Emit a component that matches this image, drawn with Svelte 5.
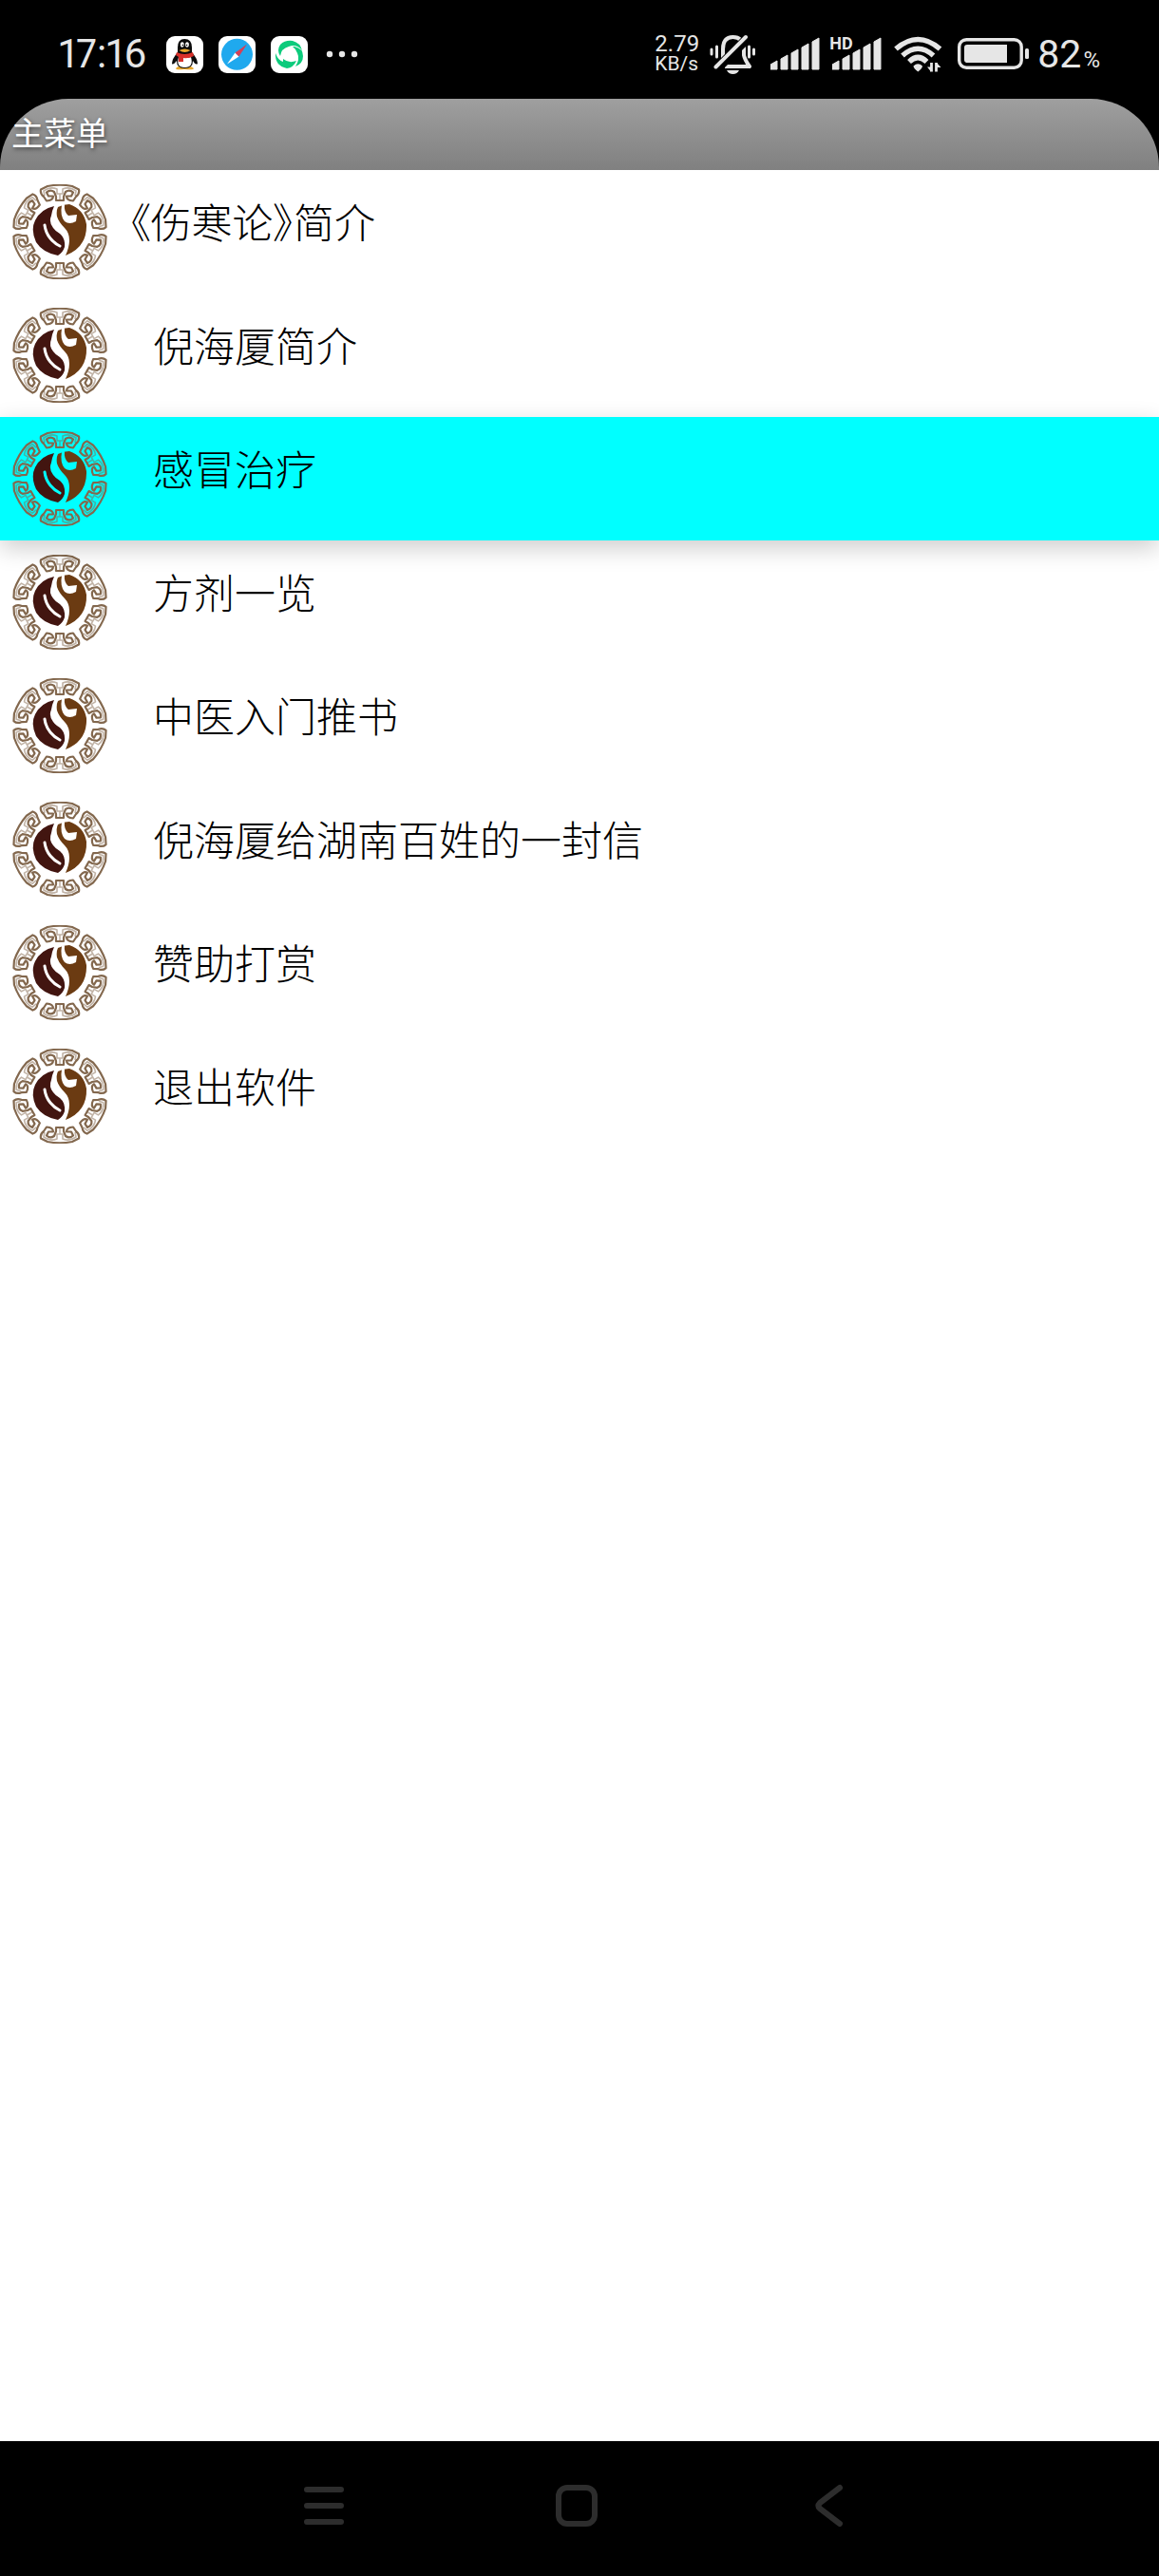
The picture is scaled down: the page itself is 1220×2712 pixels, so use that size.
<script lang="ts">
	type MenuItem = { label: string; flush?: boolean };

	const items: MenuItem[] = [
		{ label: '《伤寒论》简介', flush: true },
		{ label: '倪海厦简介' },
		{ label: '感冒治疗' },
		{ label: '方剂一览' },
		{ label: '中医入门推书' },
		{ label: '倪海厦给湖南百姓的一封信' },
		{ label: '赞助打赏' },
		{ label: '退出软件' }
	];

	let selected = $state(2);
	const turns = [0, 60, 120, 180, 240, 300];
</script>

{#snippet bars()}
	<path d="M0 41V36L7 32V41ZM11 41V30L18 26V41ZM22 41V24L29 20V41ZM33 41V18L40 14V41ZM44 41V12L51 8V41Z" stroke="#e6e6e6" stroke-width="1" stroke-linejoin="round" />
{/snippet}

{#snippet emblem()}
	<svg class="emblem" viewBox="0 0 100 100" aria-hidden="true">
		{#each turns as turn}
			<g transform="rotate({turn} 50 50)" fill="none" stroke="#83684e" stroke-linejoin="round">
				<path stroke-width="2.2" d="M37 2Q50 -.5 63 2L70 5.500Q71 10 67 13L64 17.500Q57 17 57 12.500H62L64 8.500Q60 5 56 8L54 13V17H46V13L44 8Q40 5 36 8.500L38 12.500H43Q43 17 36 17.500L33 13Q29 10 30 5.500Z" />
				<path stroke-width="1.600" opacity=".5" d="M34 12L33 7Q40 2 47 5V10H53V5Q60 2 67 7L66 12M50 10V17" />
			</g>
		{/each}
		<path fill="#421510" d="M44 23Q42 27 41 33Q38 40 43 46Q45 49 50 52Q56 57 55 66Q53 72 48 75Q32 72 25 61Q19 48 24 38Q30 26 44 23Z" />
		<path fill="none" class="slit" stroke-width="3" stroke-linecap="round" d="M34 43Q35 51 40 57Q44 62 50 65" />
		<path fill="#6b3b12" d="M48 24Q54 21 60 21Q75 26 78 42Q79 66 56 75Q60 66 60 59Q60 51 55 46Q49 40 47 34Q46 28 48 24Z" />
		<path class="hook" d="M52 22L55 21Q54 29 59 33L68 32L67 39Q60 43 55 39Q50 33 52 22Z" />
	</svg>
{/snippet}

<div class="screen">
	<div class="statusbar">
		<span class="clock">17:16</span>
		<div class="apps">
			<svg class="app" viewBox="0 0 39 39" aria-hidden="true">
				<rect width="39" height="39" rx="9" fill="#fff" />
				<path fill="#e8a72c" d="M10 34Q13 30 19 33Q25 30 29 34Q29 36 19 35Q10 36 10 34Z" />
				<path fill="#0b0b0b" d="M19.300 3Q27 3 27 12V17Q33 24 33 29Q31 31 28 26Q28 34 19.300 34Q11 34 11 26Q7 31 6 29Q6 24 12 17V12Q12 3 19.300 3Z" />
				<path fill="#fff" d="M13 22Q19 24 26 22Q29 33 19.500 33Q10 33 13 22Z" />
				<path fill="#d8302a" d="M11 17Q19 21 28 17L29 21Q23 24 18 23V27H13V22L10 20Z" />
				<ellipse cx="16.800" cy="9" rx="1.900" ry="2.800" fill="#fff" />
				<ellipse cx="22" cy="9" rx="1.900" ry="2.800" fill="#fff" />
				<circle cx="17.300" cy="9.500" r=".8" />
				<circle cx="21.600" cy="9.500" r=".8" />
				<path fill="#e8a72c" d="M13.500 15Q19.500 12 25.500 15Q19.500 19 13.500 15Z" />
			</svg>
			<svg class="app" viewBox="0 0 39 39" aria-hidden="true">
				<rect width="39" height="39" rx="9" fill="#fff" />
				<circle cx="19.500" cy="19.300" r="16.500" fill="#1fa9ee" />
				<path fill="#fff" d="M9 29.500L17.500 17.500L21.500 21.500Z" />
				<path fill="#d63f55" d="M30 8.500L17.500 17.500L21.500 21.500Z" />
			</svg>
			<svg class="app" viewBox="0 0 39 39" aria-hidden="true">
				<rect width="39" height="39" rx="9" fill="#fff" />
				<g fill="#0ccb7c">
					<path d="M10 9Q15 4 23 5Q31 7 33 15Q27 8 19 11Q11 13 10 21Q6 15 10 9Z" />
					<path d="M5 18Q8 26 13 27L13 24Q19 29 27 26Q24 33 17 34Q4 31 5 18Z" />
					<path d="M25 11Q34 13 34 21Q34 29 26 32Q31 24 28 18Q27 14 23 11Z" />
				</g>
			</svg>
		</div>
		<svg class="more" viewBox="0 0 34 8" fill="#e6e6e6" aria-hidden="true">
			<circle cx="4" cy="4" r="3.200" /><circle cx="17" cy="4" r="3.200" /><circle cx="30" cy="4" r="3.200" />
		</svg>

		<div class="speed"><span>2.79</span><span class="unit">KB/s</span></div>
		<svg class="bell" viewBox="0 0 50 50" fill="none" stroke="#e6e6e6" aria-hidden="true">
			<path stroke-width="4" d="M15 31V20Q15 7 25.500 7Q36 7 37 19V26Q38 31 43 38H17" stroke-linejoin="round" />
			<path stroke="#000" stroke-width="10" d="M8 41L41 8" />
			<path stroke-width="4" stroke-linecap="round" d="M7.500 38.500L39 7" />
			<path stroke-width="3" stroke-linecap="round" d="M3 20V25M8.500 17V28M42.500 17V28M47.500 20V25" />
			<path fill="#e6e6e6" stroke="none" d="M19 42H32Q30 46 25.500 46Q21 46 19 42Z" />
		</svg>
		<svg class="signal" viewBox="0 0 52 50" fill="#e6e6e6" aria-hidden="true">{@render bars()}</svg>
		<div class="hd">
			<svg class="signal" viewBox="0 0 52 50" fill="#e6e6e6" aria-hidden="true">{@render bars()}</svg>
			<span class="hd-tag">HD</span>
		</div>
		<svg class="wifi" viewBox="0 0 52 50" fill="none" stroke="#e6e6e6" aria-hidden="true">
			<path stroke-width="5.500" d="M2 19.500Q25.300 -.5 48.500 19.500M9 26.500Q25.300 12 41.500 26.500M16 33Q25.300 24 34.500 33" />
			<path fill="#e6e6e6" stroke="none" d="M20.500 37.500Q25.300 33 30 37.500Q30 40 25.300 43.500Q20.500 40 20.500 37.500Z" />
			<path stroke="#000" stroke-width="8" d="M40 33V46M45 33V46" />
			<path stroke-width="2.800" d="M39.500 34V43.500M44.500 34V43.500" />
			<path fill="#e6e6e6" stroke="none" d="M35 38.500H39V43.500ZM45 34L49.500 39H45Z" />
		</svg>
		<svg class="battery" viewBox="0 0 76 50" fill="#e6e6e6" aria-hidden="true">
			<rect x="1.700" y="9.700" width="65.500" height="29.500" rx="7.500" fill="none" stroke="#e6e6e6" stroke-width="3.400" />
			<path d="M10 15H52V34H10Q7 34 7 31V18Q7 15 10 15Z" />
			<rect x="71" y="19" width="4" height="11" rx="1.500" />
		</svg>
		<span class="charge">82<small>%</small></span>
	</div>

	<header>
		<h1>主菜单</h1>
	</header>

	<ul>
		{#each items as item, i}
			<li class:active={i === selected}>
				<button type="button" onclick={() => (selected = i)}>
					{@render emblem()}
					<span class="label" class:flush={item.flush}>{item.label}</span>
				</button>
			</li>
		{/each}
	</ul>

	<nav>
		<button type="button" aria-label="Menu">
			<svg viewBox="0 0 50 50"><path d="M7 8H43M7 25H43M7 42H43" /></svg>
		</button>
		<button type="button" aria-label="Home">
			<svg viewBox="0 0 50 50"><rect x="6" y="6" width="38" height="38" rx="9" /></svg>
		</button>
		<button type="button" aria-label="Back">
			<svg viewBox="0 0 50 50"><path d="M36 6L15 22Q12 25 15 28L36 44" /></svg>
		</button>
	</nav>
</div>

<style>
	:global(body) {
		margin: 0;
		background: #000;
	}
	.screen {
		display: flex;
		flex-direction: column;
		min-height: 100vh;
		background: #000;
		font-family: "Noto Sans CJK SC", sans-serif;
	}
	button {
		border: 0;
		background: none;
		font: inherit;
		cursor: pointer;
	}
	svg {
		display: block;
		flex: none;
	}
	.statusbar {
		display: flex;
		align-items: center;
		box-sizing: border-box;
		height: 104px;
		padding: 10px 62px 0 62px;
		color: #e6e6e6;
		font-family: Roboto, "Noto Sans", sans-serif;
		font-weight: 300;
	}
	.clock {
		width: 113px;
		font-size: 42px;
		line-height: 48px;
		font-weight: 400;
		font-feature-settings: "pnum";
	}
	.apps {
		display: flex;
		gap: 16px;
	}
	.app {
		width: 39px;
		height: 39px;
	}
	.more {
		width: 34px;
		height: 8px;
		margin: 0 auto 0 19px;
	}
	.speed {
		display: flex;
		flex-direction: column;
		width: 57px;
		font-size: 24px;
		line-height: 21px;
		font-weight: 400;
	}
	.unit {
		font-size: 21px;
	}
	.bell {
		width: 50px;
		height: 50px;
		margin-right: 15px;
	}
	.signal {
		width: 52px;
		height: 50px;
	}
	.hd {
		position: relative;
		margin: 0 13px;
	}
	.hd-tag {
		position: absolute;
		top: 6px;
		left: -3px;
		padding-right: 1px;
		background: #000;
		font-size: 18px;
		line-height: 16px;
		font-weight: 700;
	}
	.wifi {
		width: 52px;
		height: 50px;
		margin-right: 15px;
	}
	.battery {
		width: 76px;
		height: 50px;
		margin-right: 8px;
	}
	.charge {
		display: flex;
		align-items: baseline;
		font-size: 41px;
		line-height: 48px;
		font-weight: 400;
	}
	small {
		margin-left: 2px;
		font-size: 24px;
		line-height: 24px;
	}

	header {
		box-sizing: border-box;
		height: 75px;
		padding: 10px 12px;
		border-radius: 72px 72px 0 0;
		background: linear-gradient(#9f9f9f, #808080);
	}
	h1 {
		margin: 0;
		color: #fff;
		font-size: 34px;
		line-height: 50px;
		font-weight: 400;
		text-shadow: 1px 2px 4px rgba(0, 0, 0, 0.5);
	}

	ul {
		flex: 1;
		margin: 0;
		padding: 0;
		background: #fff;
		list-style: none;
	}
	li {
		--row: #fff;
	}
	li button {
		display: flex;
		align-items: flex-start;
		box-sizing: border-box;
		width: 100%;
		height: 130px;
		padding: 15px 13px;
		color: #000;
		text-align: left;
	}
	.active {
		--row: #00ffff;
		position: relative;
		background: #00ffff;
		box-shadow: 0 8px 24px rgba(0, 0, 0, 0.2);
	}
	.emblem {
		width: 100px;
		height: 100px;
	}
	.slit {
		stroke: var(--row);
	}
	.hook {
		fill: var(--row);
	}
	.label {
		margin-left: 48px;
		padding-top: 6px;
		font-size: 43px;
		line-height: 64px;
		font-weight: 300;
	}
	.flush {
		margin-left: 24px;
		font-feature-settings: "palt";
	}

	nav {
		display: flex;
		justify-content: center;
		height: 142px;
		padding-right: 6px;
		background: #000;
	}
	nav button {
		display: flex;
		justify-content: center;
		width: 266px;
		padding: 43px 0;
	}
	nav svg {
		width: 50px;
		height: 50px;
		fill: none;
		stroke: #2d2d2d;
		stroke-width: 6;
		stroke-linecap: round;
	}
</style>
